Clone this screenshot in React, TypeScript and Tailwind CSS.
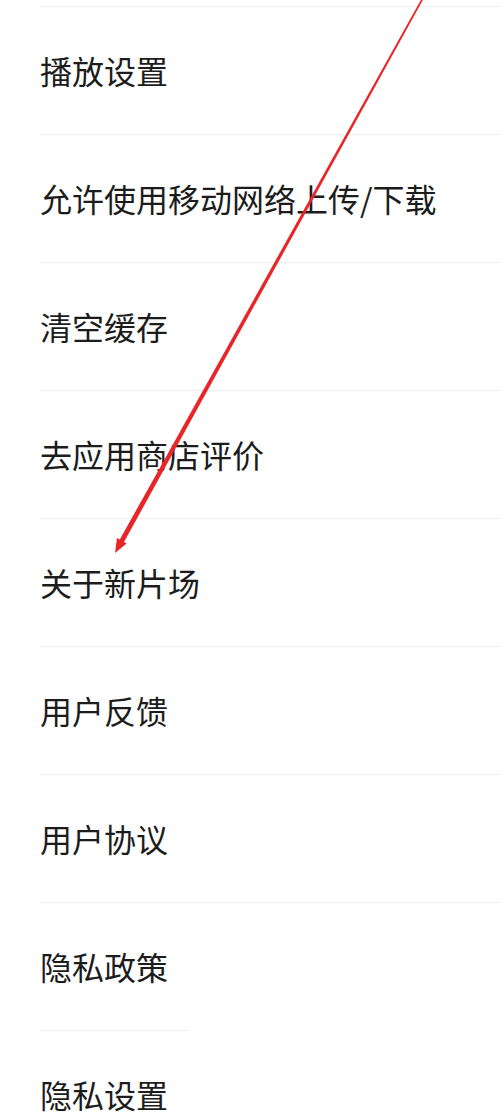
const items = [
  "播放设置",
  "允许使用移动网络上传/下载",
  "清空缓存",
  "去应用商店评价",
  "关于新片场",
  "用户反馈",
  "用户协议",
  "隐私政策",
];

function Arrow() {
  return (
    <svg
      className="absolute inset-0 pointer-events-none"
      width="500"
      height="1113"
      viewBox="0 0 500 1113"
    >
      <polygon
        points="115,553 126.6,543.6 124,542 423.4,-1 421.4,-1 119.8,539.6 117,538"
        fill="#e8262a"
      />
    </svg>
  );
}

export default function App() {
  return (
    <div
      className="relative w-[500px] h-[1113px] overflow-hidden bg-white text-[#1c1c1c]"
      style={{ fontFamily: '"Noto Sans CJK SC", "Noto Sans", sans-serif' }}
    >
      <div className="h-[6px]" />
      <div className="ml-[40px]">
        {items.map((item) => (
          <div
            key={item}
            className="h-[128px] border-t border-[#eeeeee] flex items-center text-[32px] leading-none pb-[2px]"
          >
            {item}
          </div>
        ))}
        <div className="w-[150px] border-t border-[#eeeeee]" />
        <div className="h-[127px] flex items-center text-[32px] leading-none pb-[2px]">隐私设置</div>
      </div>
      <Arrow />
    </div>
  );
}
